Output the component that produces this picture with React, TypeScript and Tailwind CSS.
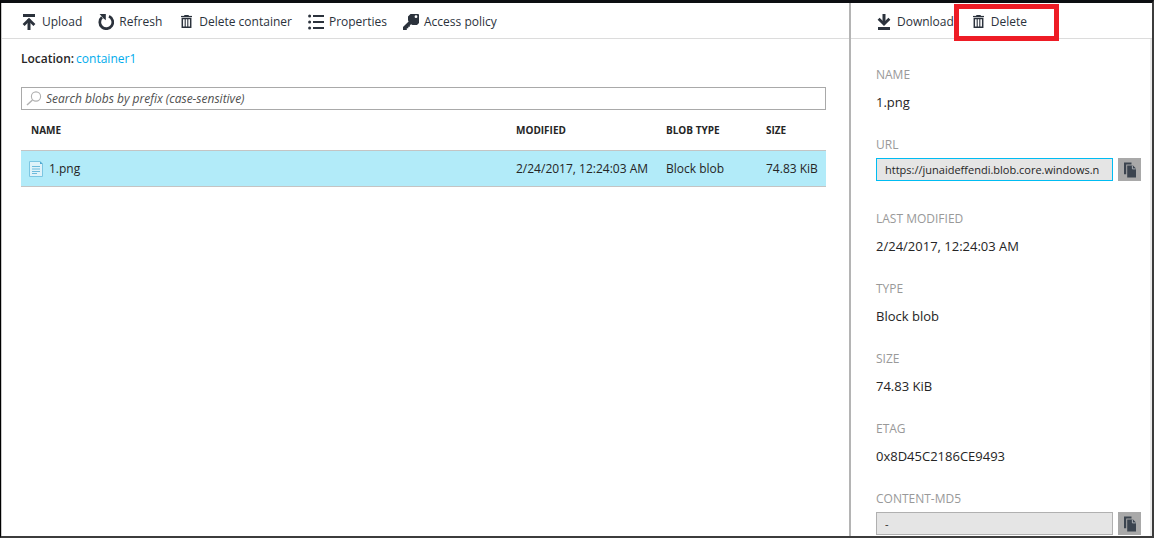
import type { ReactNode } from "react";

const blobs = [
  { name: "1.png", modified: "2/24/2017, 12:24:03 AM", type: "Block blob", size: "74.83 KiB" },
];

function UploadIcon() {
  return (
    <svg width="16" height="16" viewBox="0 0 16 16" fill="none" stroke="#2b323c" aria-hidden="true">
      <path d="M2 1.5h12" strokeWidth="3" />
      <path d="M8 5v11" strokeWidth="3" />
      <path d="M2.6 11 8 5.7l5.4 5.3" strokeWidth="2.8" />
    </svg>
  );
}

function DownloadIcon() {
  return (
    <svg width="16" height="16" viewBox="0 0 16 16" fill="none" stroke="#2b323c" aria-hidden="true">
      <path d="M2 14.5h12" strokeWidth="3" />
      <path d="M8 0v10" strokeWidth="3" />
      <path d="M2.6 4.8 8 10.1l5.4-5.3" strokeWidth="2.8" />
    </svg>
  );
}

function RefreshIcon() {
  return (
    <svg width="16" height="16" viewBox="0 0 16 16" aria-hidden="true">
      <path d="M11 2.3a6.5 6.5 0 1 1-7 1" fill="none" stroke="#2b323c" strokeWidth="2.7" />
      <path d="M1.6 0h6.2v6.2L5.6 4.4 3.6 2.2Z" fill="#2b323c" />
    </svg>
  );
}

function TrashIcon() {
  return (
    <svg width="16" height="16" viewBox="0 0 16 16" fill="none" stroke="#2b323c" aria-hidden="true">
      <path d="M6.5 2v-.5h4V2" strokeWidth="1" />
      <path d="M3 2.5h11" strokeWidth="1.2" />
      <path d="M4.3 4.6v8.7h8.4V4.6Z" strokeWidth="1.5" />
      <path d="M7.2 5v8.5M9.8 5v8.5" strokeWidth="1.1" />
    </svg>
  );
}

function ListIcon() {
  return (
    <svg width="16" height="16" viewBox="0 0 16 16" fill="#2b323c" aria-hidden="true">
      <circle cx="1.6" cy="2" r="1.5" />
      <circle cx="1.6" cy="8" r="1.5" />
      <circle cx="1.6" cy="14" r="1.5" />
      <rect x="5" y="1" width="11" height="2" />
      <rect x="5" y="7" width="11" height="2" />
      <rect x="5" y="13" width="11" height="2" />
    </svg>
  );
}

function KeyIcon() {
  return (
    <svg width="16" height="16" viewBox="0 0 16 16" fill="#2b323c" aria-hidden="true">
      <path
        fillRule="evenodd"
        d="M7.5 0H15a1 1 0 0 1 1 1v8L14 11H9.5L8 10.2 6.8 11.5v1.3H5.3v1.4H3.8V16H0v-3l5.6-5.6L5 6.2V2.5Zm5.5 1.3a1.4 1.4 0 1 0 0 2.8 1.4 1.4 0 0 0 0-2.8Z"
      />
    </svg>
  );
}

function SearchIcon() {
  return (
    <svg width="16" height="16" viewBox="0 0 16 16" fill="none" stroke="#b0b0b0" aria-hidden="true">
      <circle cx="10" cy="5.5" r="4.6" strokeWidth="1.1" />
      <path d="M6.5 9 1 14" strokeWidth="1.4" />
    </svg>
  );
}

function FileIcon() {
  return (
    <svg width="14" height="16" viewBox="0 0 14 16" fill="none" aria-hidden="true">
      <path d="M.5.5H11L13.5 3v12.5H.5Z" fill="#dff3fa" stroke="#7cc6e2" />
      <path d="M11 .3V3h2.8Z" fill="#4fa9d0" />
      <path d="M3 5.5h8M3 8h8M3 10.5h8M3 12.5h5" stroke="#6dbbdc" />
    </svg>
  );
}

function CopyIcon() {
  return (
    <svg width="14" height="16" viewBox="0 0 14 16" aria-hidden="true">
      <path d="M1 .5h7.5v2H3.2v9.7H1Z" fill="#3b444f" />
      <path d="M4.2 3.5H10L13 6.6V15.5H4.2Z" fill="#3b444f" />
      <path d="M9.4 3.6v3.3h3.4" fill="none" stroke="#b4b8bc" strokeWidth=".9" />
    </svg>
  );
}

function ToolButton({ icon, children }: { icon: ReactNode; children: ReactNode }) {
  return (
    <button type="button" className="flex items-center gap-[5px] whitespace-nowrap text-xs text-[#2b323c]">
      {icon}
      {children}
    </button>
  );
}

function Detail({ label, value }: { label: string; value: string }) {
  return (
    <div className="pb-[22px]">
      <div className="text-xs leading-5 text-[#999999]">{label}</div>
      <div className="mt-1.5 text-[13px] leading-[22px]">{value}</div>
    </div>
  );
}

function CopyField({ id, label, value, active }: { id: string; label: string; value: string; active?: boolean }) {
  return (
    <div>
      <label htmlFor={id} className="block text-xs leading-5 text-[#999999]">
        {label}
      </label>
      <div className="mt-[3px] flex gap-[5px]">
        <input
          id={id}
          readOnly
          defaultValue={value}
          className={`h-[23px] min-w-0 flex-1 border bg-[#e5e5e5] pr-[13px] pl-2 text-[11px] outline-none ${
            active ? "border-[#00bcf2]" : "border-[#b0b0b0]"
          }`}
        />
        <button
          type="button"
          aria-label={`Copy ${label}`}
          className="flex size-[23px] items-center justify-center bg-[#a9a9a9]"
        >
          <CopyIcon />
        </button>
      </div>
    </div>
  );
}

export default function App() {
  return (
    <div className="flex min-h-screen border-t-[3px] border-r-2 border-b-2 border-l border-t-[#0c0e11] border-r-[#3c3c3c] border-b-[#3c3c3c] border-l-black bg-white font-['Open_Sans','Noto_Sans',sans-serif] text-[#252525]">
      <main className="min-w-0 flex-1 border-l border-[#c8c8c8]">
        <div className="flex h-9 items-center gap-4 border-b border-[#dcdcdc] pt-0.5 pl-[19px]">
          <ToolButton icon={<UploadIcon />}>Upload</ToolButton>
          <ToolButton icon={<RefreshIcon />}>Refresh</ToolButton>
          <ToolButton icon={<TrashIcon />}>Delete container</ToolButton>
          <ToolButton icon={<ListIcon />}>Properties</ToolButton>
          <ToolButton icon={<KeyIcon />}>Access policy</ToolButton>
        </div>
        <div className="pt-2.5 pr-[23px] pl-[19px]">
          <p className="flex gap-0.5 text-xs leading-5">
            <span className="font-semibold">Location:</span>
            <a href="#container1" className="text-[#00abec]">
              container1
            </a>
          </p>
          <label className="mt-[18px] flex h-[23px] items-center gap-1 border border-[#a9a9a9] pl-1">
            <SearchIcon />
            <input
              type="text"
              aria-label="Search blobs"
              placeholder="Search blobs by prefix (case-sensitive)"
              className="min-w-0 flex-1 text-xs italic outline-none placeholder:text-[#505050]"
            />
          </label>
          <table className="w-full table-fixed border-collapse text-left">
            <thead>
              <tr className="h-10 text-[10px]">
                <th className="pt-0.5 pl-2.5 font-bold">NAME</th>
                <th className="w-[150px] pt-0.5 pl-2.5 font-bold">MODIFIED</th>
                <th className="w-[100px] pt-0.5 pl-2.5 font-bold">BLOB TYPE</th>
                <th className="w-[70px] pt-0.5 pl-2.5 font-bold">SIZE</th>
              </tr>
            </thead>
            <tbody>
              {blobs.map((blob) => (
                <tr key={blob.name} className="h-9 border-y border-[#c4c4c4] bg-[#b2ebf9] text-xs whitespace-nowrap">
                  <td className="pt-0.5 pl-2">
                    <div className="flex items-center gap-1.5 font-medium">
                      <FileIcon />
                      {blob.name}
                    </div>
                  </td>
                  <td className="pt-0.5 pl-2.5">{blob.modified}</td>
                  <td className="pt-0.5 pl-2.5">{blob.type}</td>
                  <td className="pt-0.5 pl-2.5">{blob.size}</td>
                </tr>
              ))}
            </tbody>
          </table>
        </div>
      </main>
      <aside className="flex w-[303px] shrink-0 flex-col border-l-2 border-[#b4b4b4]">
        <div className="flex h-9 items-center gap-4 border-b border-[#dcdcdc] pt-0.5 pl-[25px]">
          <ToolButton icon={<DownloadIcon />}>Download</ToolButton>
          <div className="relative">
            <ToolButton icon={<TrashIcon />}>Delete</ToolButton>
            <div className="pointer-events-none absolute -top-2.5 -left-4 h-[37px] w-[105px] border-5 border-[#ee1c25]" />
          </div>
        </div>
        <div className="flex-1 border-r-2 border-[#ebebeb] pt-[26px] pr-[9px] pb-px pl-[25px]">
          <Detail label="NAME" value="1.png" />
          <div className="pb-7">
            <CopyField id="url" label="URL" value="https://junaideffendi.blob.core.windows.net/container1/1.png" active />
          </div>
          <Detail label="LAST MODIFIED" value="2/24/2017, 12:24:03 AM" />
          <Detail label="TYPE" value="Block blob" />
          <Detail label="SIZE" value="74.83 KiB" />
          <Detail label="ETAG" value="0x8D45C2186CE9493" />
          <CopyField id="md5" label="CONTENT-MD5" value="-" />
        </div>
      </aside>
    </div>
  );
}
